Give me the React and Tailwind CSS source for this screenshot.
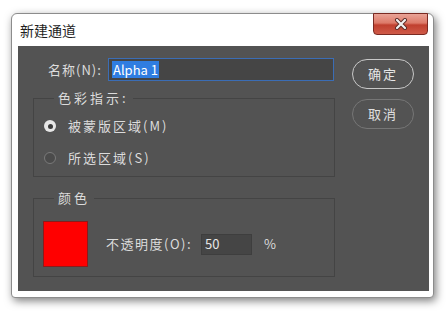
import React from 'react';

const font = { fontFamily: '"Noto Sans CJK SC", "Noto Sans", sans-serif' };

function Radio({ checked, label }) {
  return (
    <div className="flex items-center h-[16px]">
      {checked ? (
        <span className="w-[12px] h-[12px] rounded-full bg-[#e6e6e6] flex items-center justify-center">
          <span className="w-[5px] h-[5px] rounded-full bg-[#3a3a3a]" />
        </span>
      ) : (
        <span className="w-[12px] h-[12px] rounded-full bg-[#4b4b4b] border border-[#7a7a7a]" />
      )}
      <span className="ml-[12px] text-[13px] tracking-[2px] text-[#dcdcdc] whitespace-nowrap">{label}</span>
    </div>
  );
}

function Group({ title, children, className }) {
  return (
    <div className={`relative w-[302px] h-[79px] border border-[#444444] ${className}`}>
      <span className="absolute left-[20px] -top-[10px] px-[4px] bg-[#535353] text-[13px] leading-[18px] tracking-[3px] text-[#dcdcdc] whitespace-nowrap">
        {title}
      </span>
      {children}
    </div>
  );
}

export default function App() {
  return (
    <div className="w-[448px] h-[311px] bg-white pt-[13px] pl-[11px]" style={font}>
      <div className="w-[423px] h-[285px] bg-white border border-[#8c8c8c] rounded-t-[6px] rounded-b-[4px] shadow-[2px_3px_9px_rgba(0,0,0,0.5)] flex flex-col pl-[6px] pr-[4px] pb-[6px]">
        <div className="h-[32px] flex justify-between">
          <span className="mt-[7px] ml-[2px] text-[14px] leading-[18px] text-[#1e1e1e]">新建通道</span>
          <button className="-mt-px mr-[1px] w-[55px] h-[22px] rounded-b-[4px] border border-[#7a2a22] bg-[linear-gradient(#e9a396_0%,#dd7a69_45%,#c0402f_55%,#cf5a48_100%)] flex items-center justify-center">
            <svg width="14" height="12" viewBox="0 0 14 12">
              <path d="M3 2 L11 10 M11 2 L3 10" stroke="#5a2a25" strokeWidth="4" strokeLinecap="round" />
              <path d="M3 2 L11 10 M11 2 L3 10" stroke="#f2f2f2" strokeWidth="2.2" strokeLinecap="round" />
            </svg>
          </button>
        </div>
        <div className="flex-1 bg-[#535353] flex pl-[15px]">
          <div className="w-[302px] flex flex-col">
            <div className="mt-[12px] flex items-center h-[23px]">
              <span className="w-[75px] pl-[15px] text-[13px] tracking-[1px] text-[#dcdcdc] whitespace-nowrap">名称(N):</span>
              <div className="w-[226px] h-[23px] bg-[#454545] border border-[#3b6db5] flex items-center pl-[3px]">
                <span className="bg-[#2f7de1] text-white text-[13px] leading-[17px] px-[1px]">Alpha 1</span>
              </div>
            </div>
            <Group title="色彩指示:" className="mt-[17px]">
              <div className="pl-[10px] pt-[19px] flex flex-col gap-[16px]">
                <Radio checked label="被蒙版区域(M)" />
                <Radio label="所选区域(S)" />
              </div>
            </Group>
            <Group title="颜色" className="mt-[21px]">
              <div className="pl-[9px] pt-[22px] flex items-center">
                <div className="w-[45px] h-[46px] bg-[#ff0000] border border-[#8a1c1c]" />
                <span className="ml-[18px] text-[13px] tracking-[1.5px] text-[#dcdcdc] whitespace-nowrap">不透明度(O):</span>
                <div className="ml-[9px] w-[51px] h-[21px] bg-[#454545] border border-[#3e3e3e] flex items-center pl-[3px] text-[13px] text-[#e6e6e6]">
                  50
                </div>
                <span className="ml-[12px] text-[13px] text-[#dcdcdc]">%</span>
              </div>
            </Group>
          </div>
          <div className="ml-[17px] flex flex-col">
            <button className="mt-[13px] w-[62px] h-[30px] rounded-full border border-[#c8c8c8] text-[13px] tracking-[2px] text-[#e6e6e6]">
              确定
            </button>
            <button className="mt-[10px] w-[62px] h-[30px] rounded-full border border-[#767676] text-[13px] tracking-[2px] text-[#e0e0e0]">
              取消
            </button>
          </div>
        </div>
      </div>
    </div>
  );
}
